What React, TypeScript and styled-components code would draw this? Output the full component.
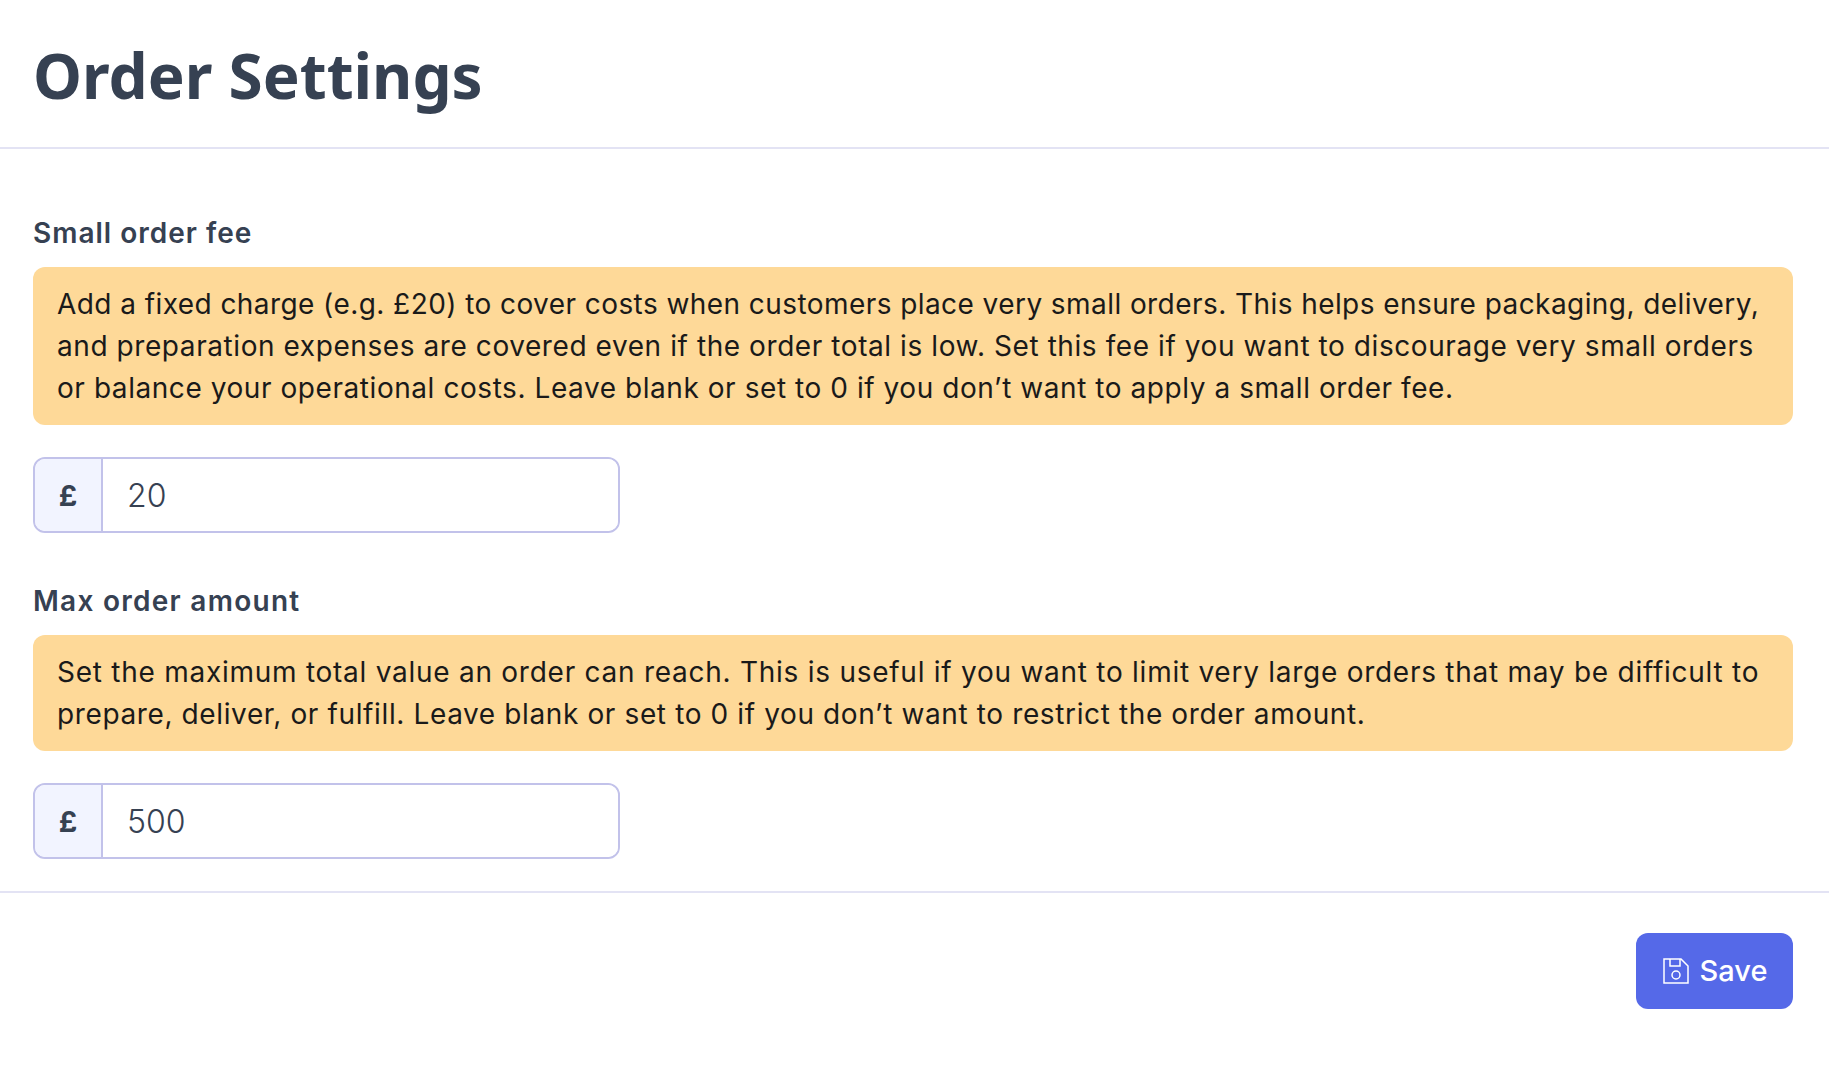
import React from "react";
import styled, { createGlobalStyle } from "styled-components";

const GlobalStyle = createGlobalStyle`
  body {
    margin: 0;
    background: #fff;
    font-family: "Inter", "Liberation Sans", sans-serif;
  }
`;

// each help line is tracked on its own so the breaks land where the design has them
const fields = [
  {
    label: "Small order fee",
    labelSpacing: 1,
    value: "20",
    help: [
      { text: "Add a fixed charge (e.g. £20) to cover costs when customers place very small orders. This helps ensure packaging, delivery,", spacing: 0.43 },
      { text: "and preparation expenses are covered even if the order total is low. Set this fee if you want to discourage very small orders", spacing: 0.575 },
      { text: "or balance your operational costs. Leave blank or set to 0 if you don’t want to apply a small order fee.", spacing: 0.56 },
    ],
  },
  {
    label: "Max order amount",
    labelSpacing: 1.27,
    value: "500",
    help: [
      { text: "Set the maximum total value an order can reach. This is useful if you want to limit very large orders that may be difficult to", spacing: 0.74 },
      { text: "prepare, deliver, or fulfill. Leave blank or set to 0 if you don’t want to restrict the order amount.", spacing: 0.62 },
    ],
  },
];

export default function App() {
  return (
    <>
      <GlobalStyle />
      <Header>
        <Title>Order Settings</Title>
      </Header>
      <Body>
        {fields.map((field) => (
          <Field key={field.label}>
            <Label $spacing={field.labelSpacing}>{field.label}</Label>
            <Help>
              {field.help.map((line) => (
                <HelpLine key={line.text} $spacing={line.spacing}>
                  {line.text}
                </HelpLine>
              ))}
            </Help>
            <InputGroup>
              <Prefix>£</Prefix>
              <Input type="text" defaultValue={field.value} />
            </InputGroup>
          </Field>
        ))}
      </Body>
      <Footer>
        <SaveButton type="button">
          <svg width="28" height="28" viewBox="0 0 28 28" fill="none" stroke="currentColor" strokeWidth="1.5">
            <path d="M2 2h17l7 7v17H2z" />
            <path d="M8 2v7h10V2" />
            <circle cx="14" cy="18" r="4" />
          </svg>
          <SaveText>Save</SaveText>
        </SaveButton>
      </Footer>
    </>
  );
}

const Header = styled.header`
  display: flex;
  align-items: center;
  box-sizing: border-box;
  height: 149px;
  padding: 4px 33px 0;
  border-bottom: 2px solid #e3e3f4;
`;

const Title = styled.h1`
  margin: 0;
  font-family: "Noto Sans", sans-serif;
  font-size: 62px;
  font-weight: 700;
  line-height: 1.2;
  color: #364152;
`;

const Body = styled.main`
  display: flex;
  flex-direction: column;
  gap: 48px;
  padding: 64px 36px 32px 33px;
  border-bottom: 2px solid #e3e3f4;
`;

const Field = styled.section`
  display: flex;
  flex-direction: column;
`;

const Label = styled.label<{ $spacing: number }>`
  margin-bottom: 14px;
  font-size: 28px;
  font-weight: 600;
  letter-spacing: ${(p) => p.$spacing}px;
  line-height: 40px;
  color: #364152;
`;

const Help = styled.p`
  margin: 0 0 32px;
  padding: 16px 24px;
  border-radius: 12px;
  background: #fed998;
  color: #1a1a1a;
  font-size: 28px;
  line-height: 42px;
`;

const HelpLine = styled.span<{ $spacing: number }>`
  display: block;
  white-space: nowrap;
  letter-spacing: ${(p) => p.$spacing}px;
`;

const InputGroup = styled.div`
  display: flex;
  width: 587px;
  height: 76px;
  box-sizing: border-box;
  border: 2px solid #c2c2ea;
  border-radius: 12px;
  overflow: hidden;
`;

const Prefix = styled.span`
  display: flex;
  align-items: center;
  justify-content: center;
  width: 66px;
  border-right: 2px solid #c2c2ea;
  background: #f2f4ff;
  color: #364152;
  font-size: 29px;
  font-weight: 700;
`;

const Input = styled.input`
  flex: 1;
  min-width: 0;
  padding: 0 24px;
  border: none;
  outline: none;
  color: #364152;
  font-family: inherit;
  font-size: 32px;
  font-weight: 300;
`;

const Footer = styled.footer`
  display: flex;
  justify-content: flex-end;
  padding: 40px 36px;
`;

const SaveButton = styled.button`
  display: flex;
  align-items: center;
  justify-content: center;
  gap: 10px;
  width: 157px;
  height: 76px;
  border: none;
  border-radius: 12px;
  background: #5569e8;
  color: #fff;
  font-family: inherit;
  font-size: 29px;
  font-weight: 500;
`;

const SaveText = styled.span`
  line-height: 1;
  margin-bottom: 2px;
`;
